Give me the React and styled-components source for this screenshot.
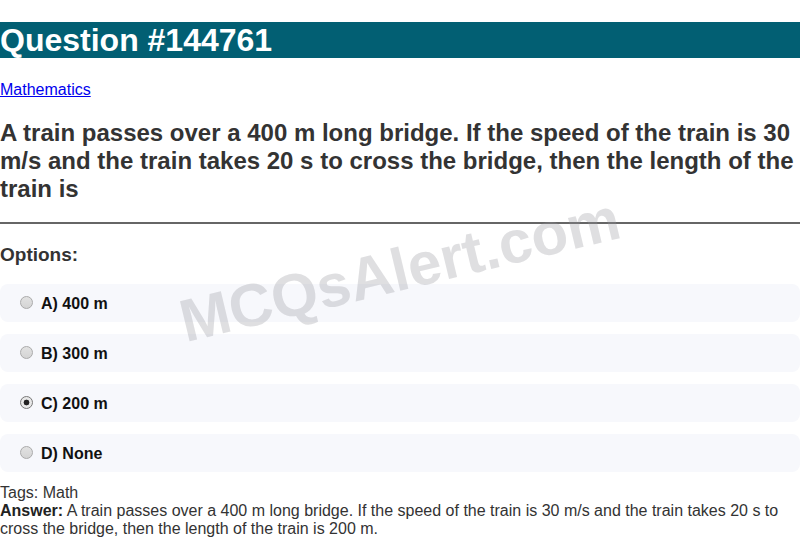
import React from 'react'
import styled, { createGlobalStyle } from 'styled-components'

const Global = createGlobalStyle`
  body {
    margin: 0;
    font-family: "Liberation Sans", Arial, sans-serif;
    background: #fff;
    color: #222;
  }
`;

const Page = styled.div`
  position: relative;
  overflow: hidden;
`;

const Title = styled.h1`
  margin: 22px 0 0;
  background-color: #025f73;
  color: #fff;
  font-size: 32px;
  line-height: 36px;
  font-weight: bold;
`;

const Subject = styled.a`
  display: inline-block;
  margin-top: 23px;
  font-size: 16px;
  line-height: 18px;
  color: #0000ee;
  text-decoration: underline;
`;

const Question = styled.h2`
  margin: 20px 0 0;
  font-size: 24px;
  line-height: 28px;
  font-weight: bold;
  color: #333;
`;

const Rule = styled.hr`
  margin: 19px 0 0;
  border: none;
  border-top: 2px solid #666;
`;

const OptionsLabel = styled.h3`
  margin: 20px 0 18px;
  font-size: 19px;
  line-height: 22px;
  color: #333;
`;

const OptionList = styled.div`
  display: flex;
  flex-direction: column;
  gap: 12px;
`;

const Radio = styled.span`
  box-sizing: border-box;
  width: 13px;
  height: 13px;
  margin: -4px 8px 0 20px;
  border-radius: 50%;
  border: 1px solid ${(p) => (p.$checked ? '#777' : '#aaa')};
  background: ${(p) =>
    p.$checked
      ? 'radial-gradient(circle, #222 0 2.6px, #e8e8e8 3.2px)'
      : 'linear-gradient(#e2e2e2, #d4d4d4)'};
  flex-shrink: 0;
`;

const Option = styled.label`
  box-sizing: border-box;
  display: flex;
  align-items: center;
  height: 38px;
  padding-top: 2px;
  background-color: #f7f8fc;
  border-radius: 8px;
  font-size: 16px;
  font-weight: bold;
  color: #111;
`;

const Footer = styled.div`
  margin-top: 12px;
  font-size: 16px;
  line-height: 18px;
  color: #333;

  b {
    color: #222;
  }
`;

const Watermark = styled.div`
  position: absolute;
  left: 188px;
  top: 292px;
  font-size: 60px;
  line-height: 1;
  font-weight: bold;
  color: rgba(150, 150, 156, 0.3);
  transform: rotate(-13.5deg);
  transform-origin: left bottom;
  pointer-events: none;
  white-space: nowrap;
`;

const options = [
  { key: 'A', text: '400 m' },
  { key: 'B', text: '300 m' },
  { key: 'C', text: '200 m', checked: true },
  { key: 'D', text: 'None' },
];

export default function App() {
  return (
    <Page>
      <Global />
      <Title>Question #144761</Title>
      <Subject href="#">Mathematics</Subject>
      <Question>
        A train passes over a 400 m long bridge. If the speed of the train is 30 m/s and the train
        takes 20 s to cross the bridge, then the length of the train is
      </Question>
      <Rule />
      <OptionsLabel>Options:</OptionsLabel>
      <OptionList>
        {options.map((o) => (
          <Option key={o.key}>
            <Radio $checked={!!o.checked} />
            {o.key}) {o.text}
          </Option>
        ))}
      </OptionList>
      <Footer>
        Tags: Math
        <br />
        <b>Answer:</b> A train passes over a 400 m long bridge. If the speed of the train is 30 m/s and
        the train takes 20 s to cross the bridge, then the length of the train is 200 m.
      </Footer>
      <Watermark>MCQsAlert.com</Watermark>
    </Page>
  )
}
